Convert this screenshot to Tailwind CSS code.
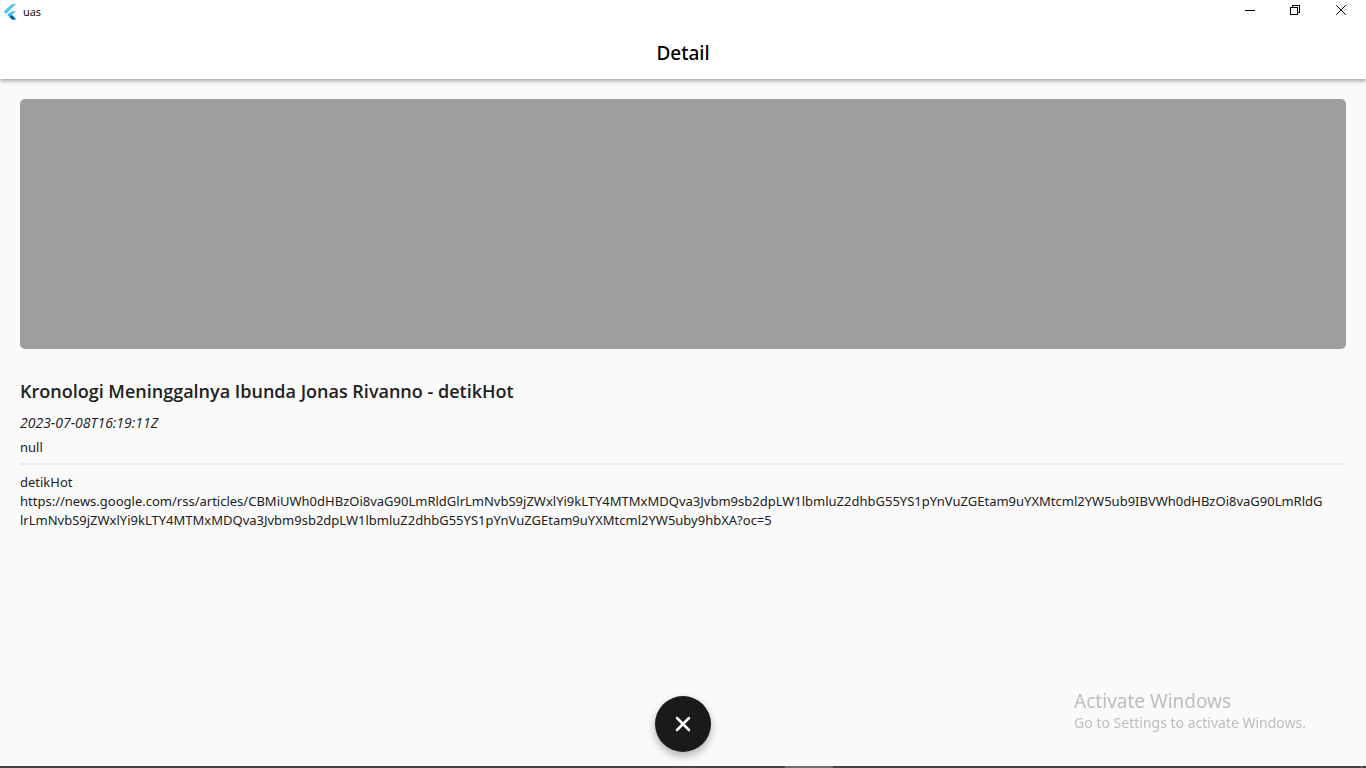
<!DOCTYPE html>
<html lang="id">
<head>
<meta charset="utf-8">
<meta name="viewport" content="width=device-width, initial-scale=1">
<title>uas</title>
<script src="https://cdn.jsdelivr.net/npm/@tailwindcss/browser@4"></script>
</head>
<body class="flex h-screen flex-col overflow-hidden bg-[#fafafa] font-['Noto_Sans','Open_Sans',sans-serif] text-[#212121]">
  <header class="relative shrink-0 bg-white shadow-[0_2px_4px_rgba(0,0,0,0.35)]">
    <div class="flex h-6 items-start justify-between">
      <div class="flex h-6 items-center gap-1 pl-[3px] font-['Open_Sans',sans-serif] text-[11px] text-black">
        <svg class="h-4 w-4" viewBox="0 0 16 16" aria-hidden="true">
          <path d="M9 0h4L3 10 .5 7.500z" fill="#54c5f8"/>
          <path d="M9 7h4l-4 4 4 4.500H9L4.500 11z" fill="#54c5f8"/>
          <path d="M6.500 13 9 11l4 4.500H9z" fill="#01579b"/>
          <path d="m4.500 11 2-2 2.500 2-2.500 2z" fill="#29b6f6"/>
        </svg>
        <span>uas</span>
      </div>
      <div class="flex pr-0.5 text-black">
        <button type="button" aria-label="Minimize" class="flex h-5 w-[46px] items-center justify-center">
          <svg class="h-[11px] w-[11px]" viewBox="0 0 11 11" shape-rendering="crispEdges"><path d="M1 5.500h10" stroke="currentColor"/></svg>
        </button>
        <button type="button" aria-label="Restore" class="flex h-5 w-[46px] items-center justify-center">
          <svg class="h-[11px] w-[11px]" viewBox="0 0 11 11" fill="none" stroke="currentColor" shape-rendering="crispEdges"><path d="M.5 2.500h7v7h-7zM2.500 2.500v-2h7v7h-2"/></svg>
        </button>
        <button type="button" aria-label="Close" class="flex h-5 w-[46px] items-center justify-center">
          <svg class="h-[11px] w-[11px]" viewBox="0 0 11 11" fill="none" stroke="currentColor"><path d="m.5.5 9 9m0-9-9 9" stroke-linecap="square"/></svg>
        </button>
      </div>
    </div>
    <h1 class="flex h-[55px] items-center justify-center pt-[3px] text-[19px] font-medium text-black">Detail</h1>
  </header>

  <main class="flex-1 px-5 pt-5">
    <div class="h-[250px] rounded-[5px] bg-[#9e9e9e]"></div>
    <h2 class="mt-[30px] font-['Open_Sans',sans-serif] text-[18px] leading-6 font-semibold">Kronologi Meninggalnya Ibunda Jonas Rivanno - detikHot</h2>
    <p class="mt-[10px] font-['Open_Sans',sans-serif] text-[14px] leading-5 italic">2023-07-08T16:19:11Z</p>
    <p class="mt-1 text-[13px] leading-5">null</p>
    <hr class="mt-[6px] mb-2 border-t-2 border-[#ebebeb]">
    <p class="text-[13px] leading-[19px]">detikHot</p>
    <p class="text-[13px] leading-[19px] break-all">https://news.google.com/rss/articles/CBMiUWh0dHBzOi8vaG90LmRldGlrLmNvbS9jZWxlYi9kLTY4MTMxMDQva3Jvbm9sb2dpLW1lbmluZ2dhbG55YS1pYnVuZGEtam9uYXMtcml2YW5ub9IBVWh0dHBzOi8vaG90LmRldG<br>lrLmNvbS9jZWxlYi9kLTY4MTMxMDQva3Jvbm9sb2dpLW1lbmluZ2dhbG55YS1pYnVuZGEtam9uYXMtcml2YW5uby9hbXA?oc=5</p>
  </main>

  <button type="button" aria-label="Close detail" class="fixed bottom-4 left-1/2 flex h-14 w-14 -translate-x-1/2 items-center justify-center rounded-full bg-[#1a1a1a] text-white shadow-[0_4px_8px_rgba(0,0,0,0.3)]">
    <svg class="h-4 w-4" viewBox="0 0 16 16" fill="none" stroke="currentColor" stroke-width="2.500" stroke-linecap="round"><path d="m2 2 12 12M14 2 2 14"/></svg>
  </button>

  <aside class="fixed right-[60px] bottom-[35px] text-[#bdbdbd]">
    <p class="text-[19px] leading-6">Activate Windows</p>
    <p class="text-[14px] leading-5">Go to Settings to activate Windows.</p>
  </aside>

  <footer class="flex h-[2px] shrink-0 bg-[#454547]">
    <div class="ml-[57.500%] w-12 bg-[#707072]"></div>
    <div class="mr-1 ml-auto w-px bg-[#8a8a8a]"></div>
  </footer>
</body>
</html>
